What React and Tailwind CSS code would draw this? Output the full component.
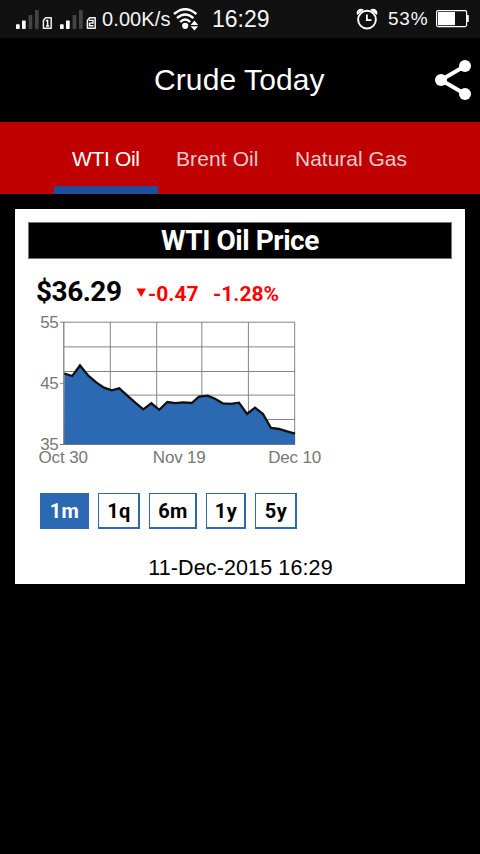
import React from "react";

const PRICE_POINTS = [
  [64.3, 373.5], [72.3, 376], [80, 365.5], [88.3, 375.7], [96.5, 382.7], [104, 387.7],
  [111.7, 390.3], [119.3, 388.3], [127.3, 395.7], [135.3, 402.7], [143.3, 409.3],
  [151.3, 403.3], [159.3, 409.8], [167.3, 402], [175.3, 403.2], [183.3, 402.3],
  [191.7, 403], [199, 396.7], [207.7, 395.7], [215, 398.7], [222.7, 403.3], [231, 403.8],
  [239, 402.7], [247, 414], [255, 407.7], [263, 414], [271, 428], [279, 429],
  [287, 431.3], [295, 433.7],
];

const GRID_X = [110.3, 156.7, 201.8, 248.4, 294.7];
const GRID_Y = [322.2, 346.9, 371.5, 395.1, 419.5];

function SignalBars({ sim }) {
  return (
    <svg width="38" height="24" viewBox="0 0 38 24" className="shrink-0">
      <rect x="1" y="17.2" width="3.7" height="4.8" rx="0.7" fill="#fff" />
      <rect x="7" y="13.4" width="3.7" height="8.6" rx="0.7" fill="#fff" />
      <rect x="13.6" y="8" width="3.7" height="14" rx="0.7" fill="#444" />
      <rect x="20" y="3" width="3.7" height="19" rx="0.7" fill="#444" />
      <path d="M30.6 10.8h5.6v10.4h-7.8v-7.8z" fill="none" stroke="#f2f2f2" strokeWidth="1.5" strokeLinejoin="round" />
      {sim === 1 ? (
        <path d="M30.8 13.6h1.8v5.4M31 18.9h3.2" fill="none" stroke="#fff" strokeWidth="1.5" />
      ) : (
        <path d="M30 13.4h4v2.7h-3.5v2.7h3.9" fill="none" stroke="#fff" strokeWidth="1.4" />
      )}
    </svg>
  );
}

function WifiIcon() {
  return (
    <svg width="26" height="24" viewBox="0 0 26 24" className="shrink-0">
      <g fill="none" stroke="#fff" strokeWidth="2.4">
        <path d="M1 7Q12.2 -2.6 23.4 7" />
        <path d="M4 11.2Q12.2 3.6 20.4 11.2" />
        <path d="M7.2 15Q12.2 10 17.2 15" />
      </g>
      <circle cx="12.2" cy="18.8" r="3.1" fill="#fff" />
      <path d="M17.6 18L21.4 13.6L25.2 18zM17.6 19.2L21.4 23.4L25.2 19.2z" fill="#fff" />
    </svg>
  );
}

function AlarmIcon() {
  return (
    <svg width="22" height="22" viewBox="0 0 22 22" className="shrink-0">
      <circle cx="11" cy="11.6" r="8.9" fill="none" stroke="#fff" strokeWidth="1.9" />
      <path d="M10.9 6.6v5.6h4.5" fill="none" stroke="#fff" strokeWidth="1.8" />
      <path d="M1.2 7C-1.1 2.8 4 -1.2 7.8 1.8zM20.8 7C23.1 2.8 18 -1.2 14.2 1.8z" fill="#fff" />
    </svg>
  );
}

function BatteryIcon() {
  return (
    <svg width="33" height="18" viewBox="0 0 33 18" className="shrink-0">
      <rect x="0.6" y="0.6" width="30" height="16" rx="1.5" fill="none" stroke="#fff" strokeWidth="1.2" />
      <rect x="2" y="2" width="17" height="13.2" fill="#fff" />
      <rect x="30.6" y="5" width="2.2" height="7" rx="0.8" fill="#fff" />
    </svg>
  );
}

function StatusBar() {
  return (
    <div className="flex h-[38px] items-center bg-[#111] pl-[15px] text-[#f4f4f4]">
      <SignalBars sim={1} />
      <div className="w-[6px]" />
      <SignalBars sim={2} />
      <span className="ml-[5px] w-[71px] whitespace-nowrap text-[20px] leading-6 tracking-[0.1px]">0.00K/s</span>
      <WifiIcon />
      <span className="ml-[13px] w-[144px] whitespace-nowrap text-[23px] leading-6">16:29</span>
      <AlarmIcon />
      <span className="ml-[10px] w-[48px] whitespace-nowrap text-[19px] leading-6 tracking-[0.8px]">53%</span>
      <BatteryIcon />
    </div>
  );
}

function Header() {
  return (
    <header className="flex h-[84px] items-center bg-black text-white">
      <div className="w-[154px]" />
      <h1 className="flex-1 whitespace-nowrap text-[30px] leading-9 tracking-[0.1px]">Crude Today</h1>
      <svg width="46" height="44" viewBox="0 0 46 44">
        <path d="M31 8L7 22L31 36" fill="none" stroke="#fff" strokeWidth="4" />
        <circle cx="31" cy="8" r="6" fill="#fff" />
        <circle cx="7" cy="22" r="6" fill="#fff" />
        <circle cx="31" cy="36" r="6" fill="#fff" />
      </svg>
    </header>
  );
}

function Tabs() {
  return (
    <nav className="flex h-[72px] bg-[#c00000] pl-[54px] text-[21px] leading-[74px] text-[#e6cccc]">
      <div className="h-full w-[104px] whitespace-nowrap border-b-8 border-[#1f4e9c] pl-[18px] tracking-[-0.35px] text-white">WTI Oil</div>
      <div className="w-[119px] whitespace-nowrap pl-[18px] tracking-[0.1px]">Brent Oil</div>
      <div className="whitespace-nowrap pl-[18px]">Natural Gas</div>
    </nav>
  );
}

function PriceChart() {
  const line = PRICE_POINTS.map((p) => p.join(",")).join(" ");
  return (
    <svg width="300" height="160" viewBox="35 310 300 160" className="block">
      <g stroke="#858585" strokeWidth="1">
        {GRID_X.map((x) => <line key={x} x1={x} x2={x} y1="322" y2="444.5" />)}
        {GRID_Y.map((y) => <line key={y} x1="64" x2="295" y1={y} y2={y} />)}
        <line x1="60" x2="64" y1="322.2" y2="322.2" />
        <line x1="60" x2="64" y1="383.3" y2="383.3" />
      </g>
      <polygon points={`64,444.5 ${line} 295,444.5`} fill="#2b6ab3" />
      <path d="M63.8 322V444.5M60 444.5H295" fill="none" stroke="#777" strokeWidth="1.2" />
      <polyline points={line} fill="none" stroke="#111" strokeWidth="2.3" />
      <g fill="#777" fontSize="17" fontFamily="Liberation Sans, sans-serif">
        <text x="40.3" y="328" textLength="18.5">55</text>
        <text x="40.3" y="389" textLength="18.5">45</text>
        <text x="40.3" y="450" textLength="18.5">35</text>
        <text x="38.5" y="463" textLength="49.5">Oct 30</text>
        <text x="152.8" y="463" textLength="53">Nov 19</text>
        <text x="268.2" y="463" textLength="53">Dec 10</text>
      </g>
    </svg>
  );
}

const BUTTON = "flex h-[36px] items-center justify-center border border-r-2 border-b-2 border-[#2b6ab3] whitespace-nowrap pl-px ";

export default function App() {
  return (
    <div className="h-[854px] w-[480px] overflow-hidden bg-black font-['Liberation_Sans',sans-serif]">
      <StatusBar />
      <Header />
      <Tabs />
      <main className="mx-[15px] mt-[15px] h-[375px] bg-white px-[13px] pt-[13px] text-black">
        <h2 className="h-[37px] w-[424px] border border-[#777] bg-black text-center font-['Roboto',sans-serif] text-[28px] font-bold leading-[35px] tracking-[-0.45px] text-white">WTI Oil Price</h2>
        <div className="flex h-[51px] items-baseline pl-[8px] pt-[15px] font-['Roboto',sans-serif] font-bold">
          <span className="w-[100px] text-[28px] leading-9 tracking-[-0.5px]">$36.29</span>
          <span className="flex w-[77px] items-baseline whitespace-nowrap text-[21px] text-[#f00]">
            <svg width="12" height="10" viewBox="0 0 12 10" className="mb-[3px] self-center"><path d="M0.5 0.5H10L5.2 9z" fill="#f00" /></svg>
            -0.47
          </span>
          <span className="whitespace-nowrap text-[21px] text-[#f00]">-1.28%</span>
        </div>
        <div className="pl-[7px]"><PriceChart /></div>
        <div className="mt-[23px] flex gap-[9px] pl-[12px] font-['Roboto',sans-serif] text-[20px] font-bold tracking-[0.4px]">
          <div className={BUTTON + "w-[49px] bg-[#2b6ab3] text-white"}>1m</div>
          <div className={BUTTON + "w-[42px]"}>1q</div>
          <div className={BUTTON + "w-[48px]"}>6m</div>
          <div className={BUTTON + "w-[40px]"}>1y</div>
          <div className={BUTTON + "w-[42px]"}>5y</div>
        </div>
        <p className="mt-[27px] pl-px text-center text-[21.5px] leading-6 tracking-[0.12px]">11-Dec-2015 16:29</p>
      </main>
    </div>
  );
}
